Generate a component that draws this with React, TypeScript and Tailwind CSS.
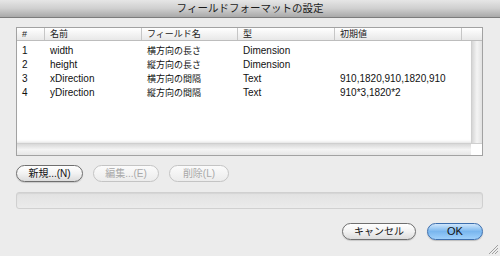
import React from "react";

const cols = [28, 97, 96, 97, 127];

const rows = [
  ["1", "width", "横方向の長さ", "Dimension", ""],
  ["2", "height", "縦方向の長さ", "Dimension", ""],
  ["3", "xDirection", "横方向の間隔", "Text", "910,1820,910,1820,910"],
  ["4", "yDirection", "縦方向の間隔", "Text", "910*3,1820*2"],
];

const headers = ["#", "名前", "フィールド名", "型", "初期値"];

function PillButton({
  children,
  disabled,
  width,
}: {
  children: React.ReactNode;
  disabled?: boolean;
  width: string;
}) {
  return (
    <div
      className={`${width} h-[17px] rounded-full border flex items-center justify-center text-[10px] leading-none ${
        disabled
          ? "border-[#c4c4c4] text-[#a8a8a8] bg-gradient-to-b from-[#fbfbfb] to-[#ececec]"
          : "border-[#6f6f6f] text-[#111] bg-gradient-to-b from-[#ffffff] via-[#f2f2f2] to-[#dcdcdc] shadow-[0_1px_1px_rgba(0,0,0,0.15)]"
      }`}
    >
      {children}
    </div>
  );
}

export default function App() {
  return (
    <div
      className="relative w-[500px] h-[256px] overflow-hidden bg-[#ececec] text-[#111]"
      style={{ fontFamily: '"Liberation Sans", "Noto Sans CJK JP", sans-serif' }}
    >
      {/* Title bar */}
      <div className="h-[18px] bg-gradient-to-b from-[#e6e6e6] via-[#cfcfcf] to-[#a9a9a9] border-b border-[#7c7c7c] flex items-center justify-center">
        <span className="text-[10.5px] text-[#1a1a1a] leading-none">フィールドフォーマットの設定</span>
      </div>

      <div className="pl-[16px] pr-[17px] pt-[9px]">
        {/* Table */}
        <div className="h-[129px] border border-[#a2a2a2] flex flex-col bg-white">
          {/* Header */}
          <div className="h-[13px] flex bg-gradient-to-b from-[#ffffff] to-[#e8e8e8] border-b border-[#bdbdbd] shrink-0">
            {headers.map((h, i) => (
              <div
                key={i}
                style={{ width: cols[i] }}
                className="h-full border-r border-[#c6c6c6] pl-[5px] flex items-center text-[9px] leading-none text-[#222]"
              >
                {h}
              </div>
            ))}
            <div className="flex-1" />
          </div>
          {/* Body */}
          <div className="flex-1 flex min-h-0">
            <div className="flex-1 bg-white pt-[3px] shadow-[inset_0_-3px_3px_-2px_rgba(0,0,0,0.12)]">
              {rows.map((r, ri) => (
                <div key={ri} className="h-[14px] flex items-center">
                  {r.map((c, ci) => (
                    <div
                      key={ci}
                      style={{ width: cols[ci] }}
                      className={`pl-[5px] whitespace-nowrap leading-none ${
                        ci === 2 ? "text-[9px]" : "text-[10px]"
                      }`}
                    >
                      {c}
                    </div>
                  ))}
                </div>
              ))}
            </div>
            <div className="w-[11px] bg-gradient-to-r from-[#d6d6d6] via-[#f4f4f4] to-[#e2e2e2] border-l border-[#cfcfcf]" />
          </div>
          {/* horizontal scrollbar */}
          <div className="h-[12px] flex shrink-0 border-t border-[#cfcfcf]">
            <div className="flex-1 bg-gradient-to-b from-[#d8d8d8] via-[#f4f4f4] to-[#e6e6e6]" />
            <div className="w-[11px] bg-white" />
          </div>
        </div>

        {/* Buttons row */}
        <div className="mt-[9px] flex gap-[10px]">
          <PillButton width="w-[67px]">新規...(N)</PillButton>
          <PillButton width="w-[66px]" disabled>
            編集...(E)
          </PillButton>
          <PillButton width="w-[60px]" disabled>
            削除(L)
          </PillButton>
        </div>

        {/* Field */}
        <div className="mt-[10px] h-[17px] rounded-[3px] border border-[#d0d0d0] bg-gradient-to-b from-[#e2e2e2] to-[#ebebeb] shadow-[inset_0_1px_1px_rgba(0,0,0,0.06)]" />

        {/* Bottom buttons */}
        <div className="mt-[14px] flex justify-end gap-[11px]">
          <PillButton width="w-[74px]">キャンセル</PillButton>
          <div className="w-[56px] h-[17px] rounded-full border border-[#3d6fae] bg-gradient-to-b from-[#cfe6fb] via-[#79b6ee] to-[#9fd0fb] flex items-center justify-center text-[11px] leading-none text-[#111] shadow-[0_1px_1px_rgba(0,0,0,0.2)]">
            OK
          </div>
        </div>
      </div>

      {/* resize grip */}
      <svg className="absolute right-[2px] bottom-[2px]" width="10" height="10" viewBox="0 0 10 10">
        <line x1="1" y1="10" x2="10" y2="1" stroke="#a0a0a0" strokeWidth="1" />
        <line x1="4" y1="10" x2="10" y2="4" stroke="#a0a0a0" strokeWidth="1" />
        <line x1="7" y1="10" x2="10" y2="7" stroke="#a0a0a0" strokeWidth="1" />
      </svg>
    </div>
  );
}
